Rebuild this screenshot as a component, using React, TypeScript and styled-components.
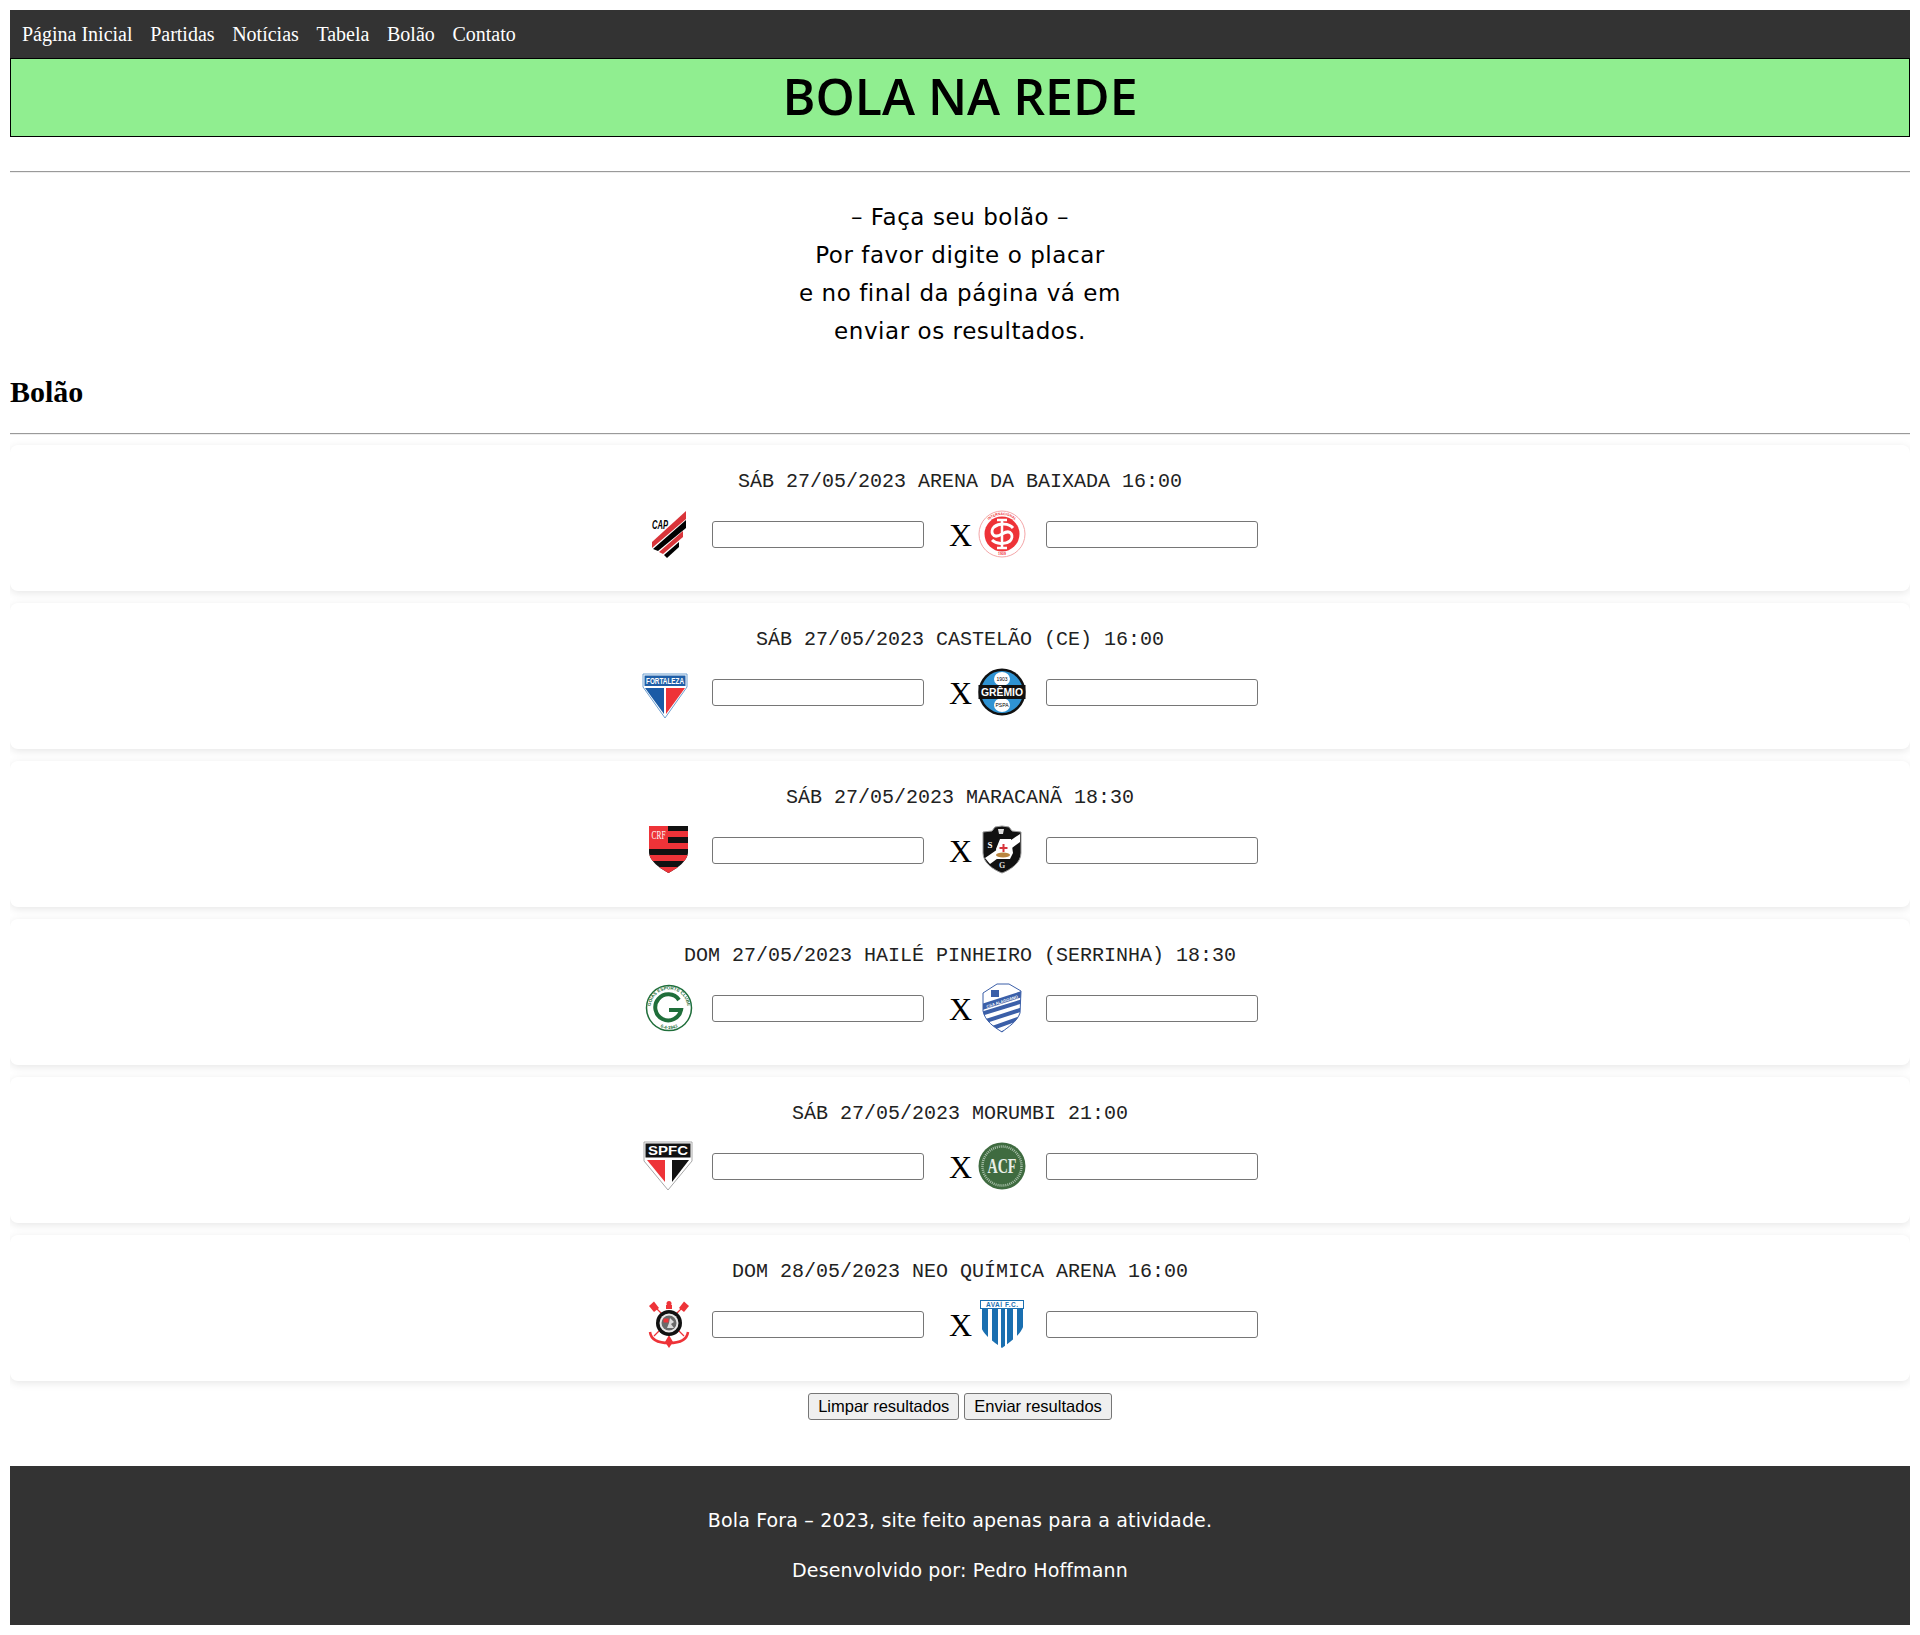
import React from "react";
import styled, { createGlobalStyle } from "styled-components";

const GlobalStyle = createGlobalStyle`
  body {
    margin: 10px;
    background: #fff;
    color: #000;
    font-family: "Liberation Serif", serif;
  }
`;

const Nav = styled.nav`
  display: flex;
  align-items: center;
  gap: 17.6px;
  height: 48px;
  padding: 0 12px;
  background: #333;
`;

const NavLink = styled.a`
  color: #fff;
  font-size: 20px;
  text-decoration: none;
`;

const Banner = styled.header`
  display: flex;
  align-items: center;
  justify-content: center;
  height: 74px;
  padding-bottom: 3px;
  background: #90ee90;
  border: 1px solid #000;
`;

const BannerTitle = styled.h1`
  margin: 0;
  font-family: "Open Sans", sans-serif;
  font-size: 50px;
  font-weight: 600;
`;

const Rule = styled.hr<{ $top: number; $bottom: number }>`
  margin: ${(p) => p.$top}px 0 ${(p) => p.$bottom}px;
  border: 0;
  border-top: 1px solid #9a9a9a;
  border-bottom: 1px solid #eee;
`;

const Intro = styled.p`
  margin: 0;
  text-align: center;
  font-family: "DejaVu Sans", sans-serif;
  font-size: 23px;
  letter-spacing: 0.56px;
  line-height: 38px;
`;

const SectionTitle = styled.h2`
  margin: 25px 0 0;
  font-size: 30px;
  line-height: 34px;
`;

const CardList = styled.section`
  display: flex;
  flex-direction: column;
  gap: 12px;
`;

const Card = styled.article`
  box-sizing: border-box;
  height: 146px;
  padding: 25px 0 0;
  background: #fff;
  border-radius: 8px;
  box-shadow: 0 2px 8px rgba(0, 0, 0, 0.1);
`;

const MatchInfo = styled.p`
  margin: 0 0 16px;
  text-align: center;
  font-family: "Liberation Mono", monospace;
  font-size: 20px;
  line-height: 23px;
  color: #222;
`;

const MatchRow = styled.div`
  display: flex;
  align-items: center;
  justify-content: center;
`;

const ScoreInput = styled.input<{ $away?: boolean }>`
  box-sizing: border-box;
  width: 212px;
  height: 27px;
  margin: 0 18px 0 ${(p) => (p.$away ? 19 : 18)}px;
  padding: 1px 2px;
  background: #fff;
  border: 1px solid #767676;
  border-radius: 3px;
`;

const Versus = styled.span`
  box-sizing: border-box;
  width: 35px;
  padding: 2px 0 0 7px;
  font-size: 32px;
  line-height: 34px;
`;

const Actions = styled.div`
  display: flex;
  justify-content: center;
  gap: 5px;
  margin: 12px 0 46px;
`;

const ActionButton = styled.button`
  box-sizing: border-box;
  height: 27px;
  padding: 0 9px;
  background: #efefef;
  border: 1px solid #767676;
  border-radius: 3px;
  color: #000;
  font-family: "Liberation Sans", sans-serif;
  font-size: 16.5px;
`;

const Footer = styled.footer`
  display: flex;
  flex-direction: column;
  gap: 26px;
  padding: 42px 0 43px;
  background: #333;
  color: #fff;
  text-align: center;
  font-family: "DejaVu Sans", sans-serif;
  font-size: 19px;
  letter-spacing: 0.15px;
  line-height: 24px;
`;

const FooterLine = styled.p`
  margin: 0;
`;

const LogoSvg = styled.svg`
  flex: none;
  display: block;
  width: 50px;
  height: 50px;
  overflow: visible;
`;

const Logo = ({ children }: { children: React.ReactNode }) => (
  <LogoSvg viewBox="0 0 50 50">{children}</LogoSvg>
);

const Paranaense = () => (
  <Logo>
    <polygon points="8,33 42,2 42,10 8,39" fill="#d9353a" />
    <polygon points="9,40 42,11 42,19 14,42" fill="#000" />
    <polygon points="15,43 39,22 39,28 19,45" fill="#d9353a" />
    <polygon points="20,46 35,33 35,38 23,49" fill="#000" />
    <text x="8" y="20" fontFamily="Liberation Sans" fontStyle="italic" fontWeight="700" fontSize="13" textLength="16" lengthAdjust="spacingAndGlyphs">CAP</text>
  </Logo>
);

const Internacional = () => (
  <Logo>
    <circle cx="25" cy="25" r="23" fill="#fff" stroke="#f4a6a8" strokeWidth="1" />
    <path id="inter-ring" d="M6 25a19 19 0 0 1 38 0" fill="none" />
    <text fill="#ee3338" fontFamily="Liberation Sans" fontWeight="700" fontSize="3.500">
      <textPath href="#inter-ring" startOffset="50%" textAnchor="middle">INTERNACIONAL</textPath>
    </text>
    <text x="25" y="46" textAnchor="middle" fill="#ee3338" fontFamily="Liberation Sans" fontWeight="700" fontSize="3.500">1909</text>
    <circle cx="25" cy="25" r="17.500" fill="#ee3338" />
    <path d="M25 10v30M20 11h10M20 39h10" stroke="#fff" strokeWidth="2.500" fill="none" />
    <path d="M36 19c-4-5-14-5-19-1-4 4-2 13 8 7s12 3 8 7c-5 4-14 3-18-1" stroke="#fff" strokeWidth="3" fill="none" />
  </Logo>
);

const Fortaleza = () => (
  <Logo>
    <polygon points="-1,7 43,7 43,20 21,51 -1,20" fill="#fff" stroke="#6d9fd0" strokeWidth="1" />
    <rect x="0.500" y="8.500" width="41" height="10.500" fill="#1f5fa8" />
    <text x="21" y="17" textAnchor="middle" fill="#fff" fontFamily="Liberation Sans" fontWeight="700" fontSize="9" textLength="38" lengthAdjust="spacingAndGlyphs">FORTALEZA</text>
    <polygon points="1,21 20,21 20,47" fill="#1a5ba6" />
    <polygon points="22,21 41,21 22,47" fill="#ee3338" />
  </Logo>
);

const Gremio = () => (
  <Logo>
    <circle cx="25" cy="25" r="23.500" fill="#111" />
    <circle cx="25" cy="25" r="21" fill="#2f93d3" />
    <ellipse cx="25" cy="12" rx="8" ry="7" fill="#fff" />
    <ellipse cx="25" cy="38" rx="8" ry="7" fill="#fff" />
    <rect x="1.500" y="18" width="47" height="14" fill="#111" />
    <text x="25" y="29" textAnchor="middle" fill="#fff" fontFamily="Liberation Sans" fontWeight="700" fontSize="11" textLength="42" lengthAdjust="spacingAndGlyphs">GRÊMIO</text>
    <text x="25" y="14" textAnchor="middle" fontFamily="Liberation Sans" fontSize="5">1903</text>
    <text x="25" y="40" textAnchor="middle" fontFamily="Liberation Sans" fontSize="5">PSPA</text>
  </Logo>
);

const Flamengo = () => (
  <Logo>
    <defs>
      <clipPath id="fla-shield">
        <path d="M5 1h39v26c0 9-12 17-19.500 21C17 44 5 36 5 27z" />
      </clipPath>
    </defs>
    <g clipPath="url(#fla-shield)">
      <rect x="5" y="1" width="39" height="47" fill="#111" />
      <rect x="24" y="6" width="20" height="6" fill="#ee3338" />
      <rect x="5" y="18" width="39" height="6" fill="#ee3338" />
      <rect x="5" y="30" width="39" height="6" fill="#ee3338" />
      <rect x="5" y="42" width="39" height="6" fill="#ee3338" />
      <rect x="5" y="1" width="19" height="17" fill="#ee3338" />
    </g>
    <text x="14.500" y="14" textAnchor="middle" fill="#fff" fontFamily="Liberation Serif" fontSize="13" textLength="14" lengthAdjust="spacingAndGlyphs">CRF</text>
  </Logo>
);

const Vasco = () => (
  <Logo>
    <path d="M6 7l9-1 3-4 7-1 7 1 3 4 9 1v21c0 10-11 17-19 20C17 45 6 38 6 28z" fill="#111" stroke="#999" strokeWidth="1" />
    <polygon points="43,9 43,17 13,39 8,33" fill="#fff" />
    <path d="M23 14h11l2 14-3 6H20l-1-10z" fill="#fff" />
    <path d="M26.500 19v8M22.500 23h8" stroke="#d6333a" strokeWidth="2" />
    <ellipse cx="26" cy="30" rx="7" ry="2.500" fill="#b9853f" />
    <path d="M21 4h6l-1 5h-4z" fill="#ddd" />
    <text x="13" y="23" textAnchor="middle" fill="#fff" fontFamily="Liberation Serif" fontWeight="700" fontSize="9">S</text>
    <text x="25" y="43" textAnchor="middle" fill="#ddd" fontFamily="Liberation Serif" fontWeight="700" fontSize="8">G</text>
  </Logo>
);

const Goias = () => (
  <Logo>
    <circle cx="25" cy="25" r="22.500" fill="#fff" stroke="#1f6e3a" strokeWidth="1.500" />
    <path id="goias-top" d="M6.500 25a18.500 18.500 0 0 1 37 0" fill="none" />
    <path id="goias-bottom" d="M4 25a21 21 0 0 0 42 0" fill="none" />
    <text fill="#1f6e3a" fontFamily="Liberation Sans" fontWeight="700" fontSize="4.500">
      <textPath href="#goias-top" startOffset="50%" textAnchor="middle">GOIÁS ESPORTE CLUBE</textPath>
    </text>
    <text fill="#1f6e3a" fontFamily="Liberation Sans" fontWeight="700" fontSize="4.500">
      <textPath href="#goias-bottom" startOffset="50%" textAnchor="middle">6-4-1943</textPath>
    </text>
    <path d="M35 17a13 13 0 1 0 2 10H25" fill="none" stroke="#1f6e3a" strokeWidth="4" />
  </Logo>
);

const Csa = () => (
  <Logo>
    <defs>
      <clipPath id="csa-shield">
        <path d="M6 10L20 1h12l12 7-1 22c-3 9-12 14-18 19C17 44 8 38 6 28z" />
      </clipPath>
    </defs>
    <path d="M6 10L20 1h12l12 7-1 22c-3 9-12 14-18 19C17 44 8 38 6 28z" fill="#fff" stroke="#3b5fa8" strokeWidth="1" />
    <g clipPath="url(#csa-shield)" stroke="#3b5fa8" strokeWidth="4">
      <path d="M4 31L46 18M6 39L46 26M10 47L46 34M16 53L46 43" />
      <path d="M5 24L45 11" strokeWidth="6" />
    </g>
    <text x="25" y="20" textAnchor="middle" fill="#fff" fontFamily="Liberation Sans" fontWeight="700" fontSize="4" transform="rotate(-18 25 18)">CSA ALAGOANO</text>
    <path d="M14 7h8v7h-8z" fill="#3b5fa8" />
  </Logo>
);

const SaoPaulo = () => (
  <Logo>
    <polygon points="0,1 48,1 48,20 24,49 0,20" fill="#fff" stroke="#a8a8a8" strokeWidth="1" />
    <rect x="1.500" y="2.500" width="45" height="14" fill="#111" />
    <text x="24" y="14" textAnchor="middle" fill="#fff" fontFamily="Liberation Sans" fontWeight="700" fontSize="13" textLength="40" lengthAdjust="spacingAndGlyphs">SPFC</text>
    <polygon points="3,19 21,19 21,41" fill="#ee3338" />
    <polygon points="28,19 45,19 28,41" fill="#111" />
  </Logo>
);

const Chapecoense = () => (
  <Logo>
    <circle cx="25" cy="25" r="23.500" fill="#3f6b40" />
    <circle cx="25" cy="25" r="19.500" fill="none" stroke="#a9c0aa" strokeWidth="2.500" strokeDasharray="1 1" />
    <text x="25" y="32" textAnchor="middle" fill="#e8efe8" fontFamily="Liberation Serif" fontWeight="700" fontSize="21" textLength="29" lengthAdjust="spacingAndGlyphs">ACF</text>
  </Logo>
);

const Corinthians = () => (
  <Logo>
    <path d="M10 7l30 30M40 7L10 37" stroke="#ee3338" strokeWidth="1.200" />
    <polygon points="5,7 10,2.500 15,9 10,13" fill="#ee3338" />
    <polygon points="45,7 40,2.500 35,9 40,13" fill="#ee3338" />
    <path d="M6 33c1 8 9 11 19 11s18-3 19-11" fill="none" stroke="#ee3338" strokeWidth="2.500" />
    <polygon points="25,49 21,43 25,36 29,43" fill="#ee3338" />
    <circle cx="25" cy="4.500" r="2.500" fill="#ee3338" />
    <rect x="22" y="6" width="6" height="4" fill="#ee3338" />
    <circle cx="25" cy="24" r="13" fill="#111" />
    <circle cx="25" cy="24" r="9.500" fill="#e8e8e8" />
    <circle cx="25" cy="24" r="7.500" fill="#6a6a6a" />
    <rect x="19.500" y="19.500" width="5" height="4" fill="#ee3338" />
    <path d="M26 19l4 4-3 2 3 4h-7l2-5z" fill="#ddd" />
  </Logo>
);

const Avai = () => (
  <Logo>
    <defs>
      <clipPath id="avai-shield">
        <path d="M3 1h44v22c0 11-14 20-22 26C17 43 3 34 3 23z" />
      </clipPath>
    </defs>
    <g clipPath="url(#avai-shield)">
      <rect x="3" y="1" width="44" height="48" fill="#fff" />
      <rect x="3.500" y="1.500" width="43" height="8" fill="#fff" stroke="#1a6fb0" strokeWidth="1" />
      <rect x="5" y="10" width="6" height="40" fill="#1a6fb0" />
      <rect x="15" y="10" width="6" height="40" fill="#1a6fb0" />
      <rect x="24" y="10" width="4" height="40" fill="#1a6fb0" />
      <rect x="30" y="10" width="6" height="40" fill="#1a6fb0" />
      <rect x="40" y="10" width="6" height="40" fill="#1a6fb0" />
    </g>
    <text x="25" y="8" textAnchor="middle" fill="#1a6fb0" fontFamily="Liberation Sans" fontWeight="700" fontSize="6.500" textLength="32" lengthAdjust="spacing">AVAÍ F.C.</text>
  </Logo>
);

const matches = [
  { info: "SÁB 27/05/2023 ARENA DA BAIXADA 16:00", home: Paranaense, away: Internacional },
  { info: "SÁB 27/05/2023 CASTELÃO (CE) 16:00", home: Fortaleza, away: Gremio },
  { info: "SÁB 27/05/2023 MARACANÃ 18:30", home: Flamengo, away: Vasco },
  { info: "DOM 27/05/2023 HAILÉ PINHEIRO (SERRINHA) 18:30", home: Goias, away: Csa },
  { info: "SÁB 27/05/2023 MORUMBI 21:00", home: SaoPaulo, away: Chapecoense },
  { info: "DOM 28/05/2023 NEO QUÍMICA ARENA 16:00", home: Corinthians, away: Avai },
];

const links = ["Página Inicial", "Partidas", "Notícias", "Tabela", "Bolão", "Contato"];

export default function App() {
  return (
    <>
      <GlobalStyle />
      <Nav>
        {links.map((link) => (
          <NavLink href="#" key={link}>
            {link}
          </NavLink>
        ))}
      </Nav>
      <Banner>
        <BannerTitle>BOLA NA REDE</BannerTitle>
      </Banner>
      <Rule $top={34} $bottom={25} />
      <Intro>
        – Faça seu bolão –<br />
        Por favor digite o placar<br />
        e no final da página vá em<br />
        enviar os resultados.
      </Intro>
      <SectionTitle>Bolão</SectionTitle>
      <Rule $top={24} $bottom={10} />
      <CardList>
        {matches.map(({ info, home: Home, away: Away }) => (
          <Card key={info}>
            <MatchInfo>{info}</MatchInfo>
            <MatchRow>
              <Home />
              <ScoreInput type="text" />
              <Versus>X</Versus>
              <Away />
              <ScoreInput type="text" $away />
            </MatchRow>
          </Card>
        ))}
      </CardList>
      <Actions>
        <ActionButton>Limpar resultados</ActionButton>
        <ActionButton>Enviar resultados</ActionButton>
      </Actions>
      <Footer>
        <FooterLine>Bola Fora – 2023, site feito apenas para a atividade.</FooterLine>
        <FooterLine>Desenvolvido por: Pedro Hoffmann</FooterLine>
      </Footer>
    </>
  );
}
